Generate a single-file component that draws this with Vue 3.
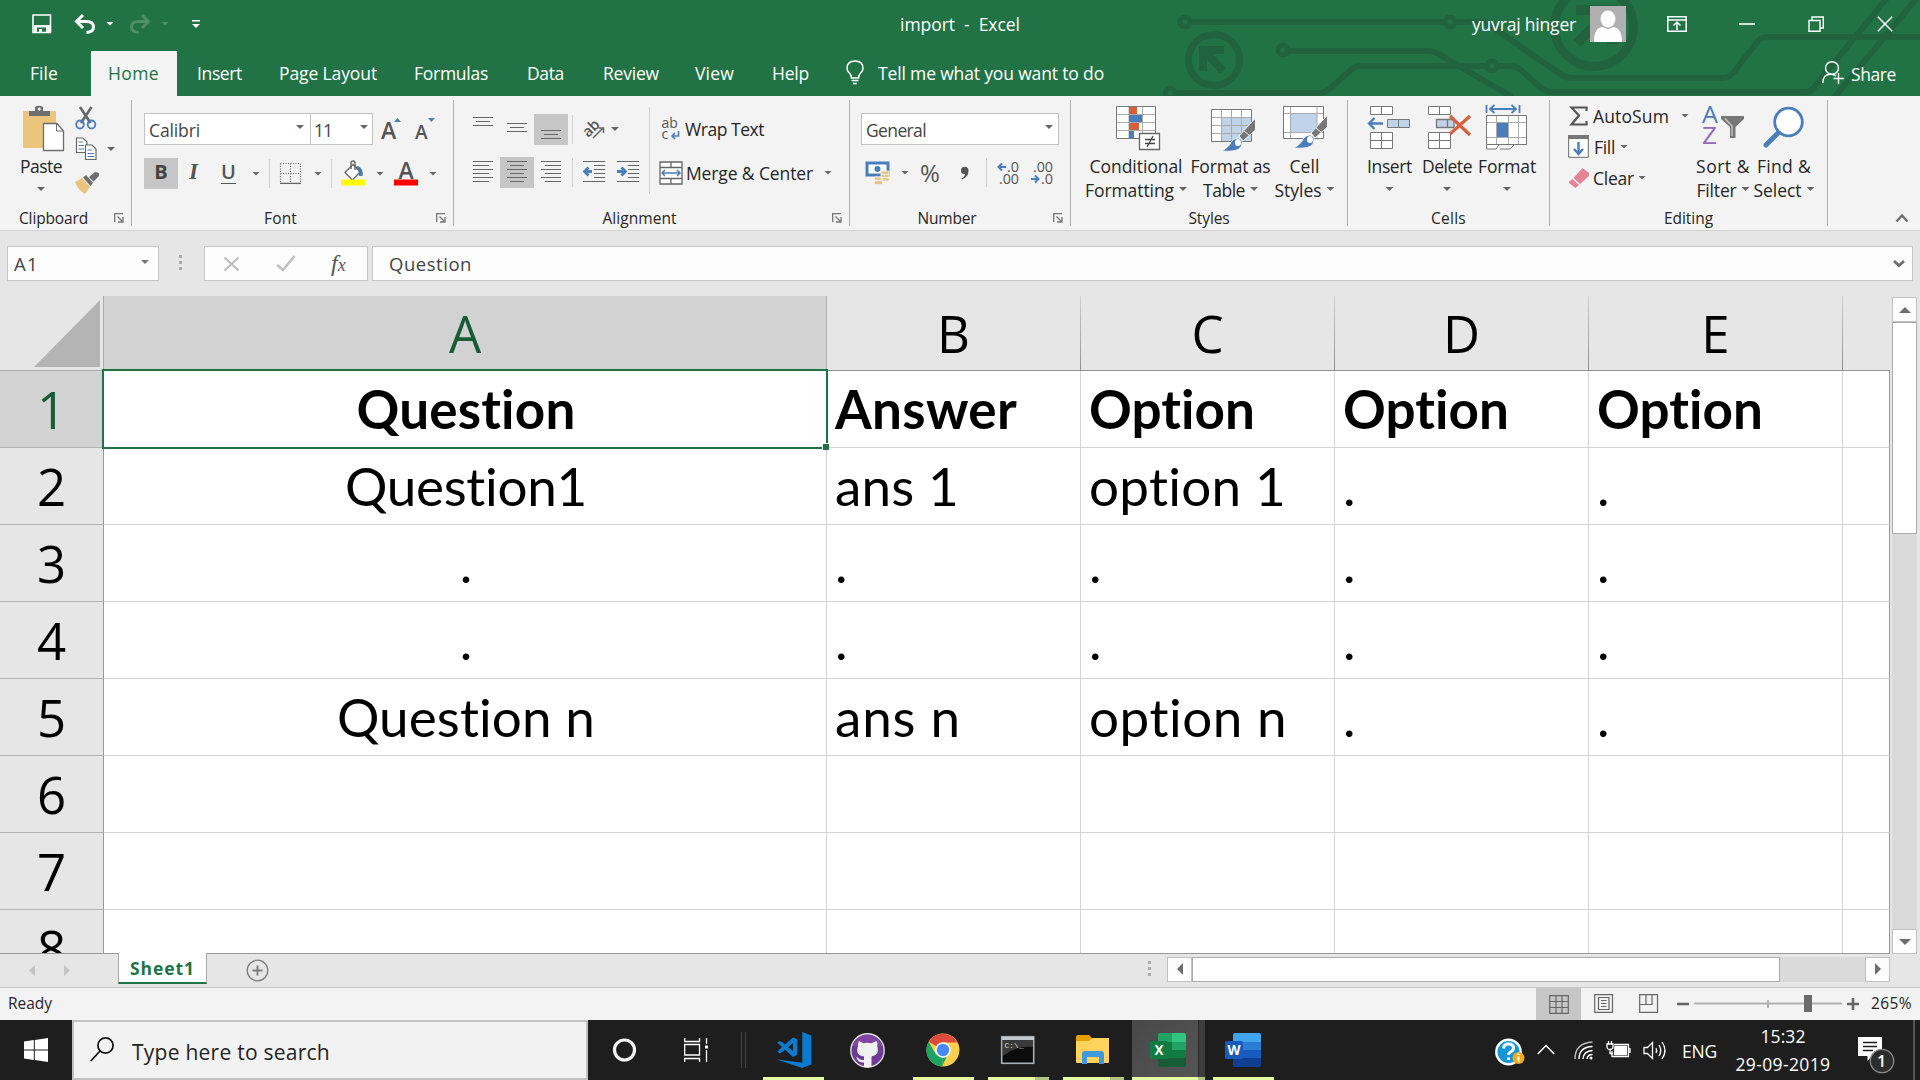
<script setup>
const tabs = [
  ['Insert', 43], ['Page Layout', 96], ['Formulas', 72], ['Data', 35],
  ['Review', 54], ['View', 37], ['Help', 35],
]

const columns = ['A', 'B', 'C', 'D', 'E', '']

const rows = [
  [['Question', 218], ['Answer', 180], ['Option', 165], ['Option', 165], ['Option', 165]],
  [['Question1', 241], ['ans 1', 122], ['option 1', 196], ['.', 0], ['.', 0]],
  [['.', 0], ['.', 0], ['.', 0], ['.', 0], ['.', 0]],
  [['.', 0], ['.', 0], ['.', 0], ['.', 0], ['.', 0]],
  [['Question n', 257], ['ans n', 124], ['option n', 197], ['.', 0], ['.', 0]],
  [], [], [],
]

// Spreads the letters of a label so that it fills the given width.
const vFit = {
  mounted(el, { value }) {
    if (!value) return
    const natural = el.getBoundingClientRect().width
    el.style.letterSpacing = (value + 2 - natural) / el.textContent.length + 'px'
  },
}
</script>

<template>
  <div class="screen">
    <header class="top">
      <svg class="art" width="1920" height="96" viewBox="0 0 1920 96" fill="none" stroke="#22633f" stroke-width="6">
        <circle cx="1185" cy="22" r="5" stroke-width="5" />
        <path d="M1191 22H1443M1457 22H1478Q1490 22 1498 31L1560 74Q1566 78 1572 78H1722Q1729 78 1733 73L1758 41Q1762 37 1768 37H1920" />
        <circle cx="1450" cy="22" r="5" stroke-width="5" />
        <circle cx="1283" cy="50" r="5" stroke-width="5" />
        <path d="M1289 51H1428Q1435 51 1442 56L1512 97M1177 93H1320Q1324 93 1329 89L1352 69Q1356 66 1362 66H1486M1498 66H1510Q1516 66 1521 70L1541 88Q1546 92 1552 92H1806Q1811 92 1815 86L1887 -2M1834 98L1917 -2" />
        <circle cx="1492" cy="66" r="5" stroke-width="5" />
        <circle cx="1170" cy="93" r="5" stroke-width="5" />
        <circle cx="1214" cy="60" r="25.5" stroke-width="7" />
        <path d="M1224 50H1203V71M1204 51L1223 71" stroke-width="8" />
        <circle cx="1594" cy="27" r="39.500" stroke-width="9" />
        <path d="M1576 10H1612V44M1611 10L1577 43" stroke-width="10" />
      </svg>
      <div class="titlebar">
        <svg width="20" height="20" viewBox="0 0 20 20"><path d="M1 1H18.500V18.500H1Z" fill="none" stroke="#fff" stroke-width="1.600" /><path d="M2 11H18V18H14V13.500H5V18H2ZM7 15h3v4H7Z" fill="#f3f3f3" /></svg>
        <svg width="22" height="20" viewBox="0 0 22 20" fill="none" stroke="#fff" stroke-width="3"><path d="M2 7.500H12.500Q19.500 7.500 19.500 13Q19.500 18 12.500 18.500M9 1L2.500 7.500L9 14" /></svg>
        <i class="dd light"></i>
        <svg width="22" height="20" viewBox="0 0 22 20" fill="none" stroke="#4d9068" stroke-width="3"><path d="M20 7.500H9.500Q2.500 7.500 2.500 13Q2.500 18 9.500 18.500M13 1L19.500 7.500L13 14" /></svg>
        <i class="dd dim"></i>
        <svg width="8" height="8" viewBox="0 0 8 8"><path d="M0 0H8V1.500H0ZM0 4H8L4 8Z" fill="#fff" /></svg>
        <span class="t title" v-fit="118">import&nbsp; -&nbsp; Excel</span>
        <span class="t" v-fit="102">yuvraj hinger</span>
        <svg width="36" height="36" viewBox="0 0 36 36"><rect width="36" height="36" fill="#b0b0b0" /><ellipse cx="18" cy="13" rx="7.500" ry="8.500" fill="#fff" /><path d="M4 36Q4 21 13 21Q18 25 23 21Q32 22 32 36Z" fill="#fff" /></svg>
        <svg width="20" height="16" viewBox="0 0 20 16" fill="none" stroke="#fff" stroke-width="1.500"><path d="M.8 .8H19.200V15.200H.8ZM1 4H19M10 14V7M6.500 9.500L10 6L13.500 9.500" /></svg>
        <svg width="16" height="16" viewBox="0 0 16 16"><path d="M0 8H16" stroke="#fff" stroke-width="1.600" /></svg>
        <svg width="16" height="16" viewBox="0 0 16 16" fill="none" stroke="#fff" stroke-width="1.400"><path d="M1 4.500H12V15.300H1ZM4 4V1H15.300V12H12.500" /></svg>
        <svg width="16" height="16" viewBox="0 0 16 16"><path d="M.8 .8L15.200 15.200M15.200 .8L.8 15.200" stroke="#fff" stroke-width="1.500" /></svg>
      </div>
      <nav class="tabs">
        <span class="t file" v-fit="26">File</span>
        <div class="home"><span class="t" v-fit="49">Home</span></div>
        <span v-for="[name, w] in tabs" :key="name" class="t" v-fit="w">{{ name }}</span>
        <svg width="18" height="25" viewBox="0 0 18 25" fill="none" stroke="#fff" stroke-width="1.500"><path d="M5.500 18Q5.500 15 3 12.500Q1 10.500 1 8.500Q1 1 9 1Q17 1 17 8.500Q17 10.500 15 12.500Q12.500 15 12.500 18ZM5.500 20.500H12.500M7 23.500H11" /></svg>
        <span class="t" v-fit="224">Tell me what you want to do</span>
        <svg width="22" height="23" viewBox="0 0 22 23" fill="none" stroke="#fff" stroke-width="1.400"><ellipse cx="10" cy="7" rx="6.500" ry="6.300" /><path d="M.8 22Q1 13 9 13.300Q12 13.300 14 15M16.500 12V23M11.500 17.500H22" /></svg>
        <span class="t share" v-fit="43">Share</span>
      </nav>
    </header>

    <section class="ribbon">
      <div class="group g-clip">
        <div class="body">
          <div class="big paste">
            <svg width="46" height="48" viewBox="18 105 46 48"><g transform="translate(-1 0)"><rect x="24" y="111" width="33" height="37" rx="1" fill="#ecc57c" /><path d="M30 116V111H36V107Q40 104.500 44 107V111H51V116Z" fill="#6e6e6e" /><circle cx="40.300" cy="109" r="1.500" fill="#f3f3f3" /><path d="M44.500 123.500H58L64.500 131V150.500H44.500Z" fill="#fff" stroke="#6e6e6e" stroke-width="1.300" /><path d="M57.500 123.500V131H64.500" fill="none" stroke="#6e6e6e" /></g></svg>
            <p><span class="t" v-fit="40">Paste</span></p>
            <p><i class="dd"></i></p>
          </div>
          <div class="clips">
            <svg width="22" height="24" viewBox="0 0 22 24" fill="none"><path d="M5 1L15.500 17M16.500 1L6 17" stroke="#666" stroke-width="2.600" /><ellipse cx="5" cy="18.500" rx="3.800" ry="4" stroke="#4a7ebb" stroke-width="1.800" /><ellipse cx="16.500" cy="18.500" rx="3.800" ry="4" stroke="#4a7ebb" stroke-width="1.800" /></svg>
            <div class="copy">
              <svg width="22" height="24" viewBox="0 0 22 24" fill="#fff" stroke="#666" stroke-width="1.200"><path d="M1.500 1H8L12 5V15.500H1.500Z" /><path d="M10.500 8H17L21 12V22.500H10.500Z" /><path d="M3.500 5H8M3.500 8.500H9M3.500 12H9M12.500 13H17M12.500 16.500H19M12.500 19.500H19" stroke="#4a7ebb" /></svg>
              <i class="dd"></i>
            </div>
            <svg width="24" height="22" viewBox="0 0 24 22"><path d="M0 10L7 6L15 15L10 22Q3 18 0 10Z" fill="#ecc57c" /><path d="M8 5.500L11 3L18 11L15.500 14ZM14 5L20 0L24 1V4L18.500 9.500Z" fill="#6e6e6e" /></svg>
          </div>
        </div>
        <footer><span class="t s" v-fit="67">Clipboard</span><svg class="launch" width="10" height="10" viewBox="0 0 10 10"><path d="M.7 9V.7H9M3.500 3.500L8 8M9 4V9H4" fill="none" stroke="#777" stroke-width="1.300" /></svg></footer>
      </div>
      <i class="sep"></i>

      <div class="group g-font">
        <div class="body rows">
          <div class="row f1">
            <div class="combo"><span class="t" v-fit="49">Calibri</span><i class="dd"></i></div>
            <div class="combo size"><span class="t" v-fit="16">11</span><i class="dd"></i></div>
            <svg width="21" height="28" viewBox="0 0 21 28"><text x="0" y="24" font-size="23" class="glyph semi">A</text><path d="M13 7L16.500 3L20 7Z" fill="#4a7ebb" /></svg>
            <svg width="21" height="28" viewBox="0 0 21 28"><text x="0" y="24" font-size="19" class="glyph semi">A</text><path d="M13 3H20L16.500 7Z" fill="#4a7ebb" /></svg>
          </div>
          <div class="row f2">
            <div class="on"><b class="bold">B</b></div>
            <span class="italic">I</span>
            <span class="under">U</span>
            <i class="dd"></i><i class="bar"></i>
            <svg width="21" height="21" viewBox="0 0 21 21" fill="none" stroke="#666"><path d="M.5 .5H20.500M.5 10.500H20.500M.5 .5V20M10.500 .5V20M20.500 .5V20" stroke-dasharray="1 1.500" stroke-width="1.200" /><path d="M0 20.400H21" stroke-width="1.300" /></svg>
            <i class="dd"></i><i class="bar"></i>
            <svg width="24" height="27" viewBox="0 0 24 27"><path d="M17 6Q23 9 21.500 16H18Q18 10 14 7Z" fill="#4a7ebb" /><path d="M4 12.500L12 4.500L19 12L11.500 20Z" fill="#fff" stroke="#666" stroke-width="1.300" /><path d="M10 9V3Q10 1 12 1Q14 1 14 3V10" fill="none" stroke="#666" stroke-width="1.400" /><rect y="19.500" width="24" height="6" fill="#ff0" /></svg>
            <i class="dd"></i>
            <svg width="24" height="27" viewBox="0 0 24 27"><text x="4.500" y="19" font-size="23" class="glyph soft">A</text><rect y="19.500" width="24" height="6" fill="red" /></svg>
            <i class="dd"></i>
          </div>
        </div>
        <footer><span class="t s" v-fit="31">Font</span><svg class="launch" width="10" height="10" viewBox="0 0 10 10"><path d="M.7 9V.7H9M3.500 3.500L8 8M9 4V9H4" fill="none" stroke="#777" stroke-width="1.300" /></svg></footer>
      </div>
      <i class="sep"></i>

      <div class="group g-align">
        <div class="body">
          <div class="rows aleft">
            <div class="row a1">
              <svg class="ln" width="20" height="32"><path d="M0 4.500H20M3 8.500H17M0 12.500H20" /></svg>
              <svg class="ln" width="20" height="32"><path d="M0 10.500H20M3 14.500H17M0 18.500H20" /></svg>
              <div class="on"><svg class="ln" width="20" height="31"><path d="M0 16.500H20M3 20.500H17M0 24.500H20" /></svg></div>
              <i class="bar"></i>
              <svg width="20" height="20" viewBox="0 0 20 20"><text x="-1" y="15" font-size="15" class="glyph soft" transform="rotate(-45 6 12)">ab</text><path d="M8 19L18 9M13.500 9H18.500V14" fill="none" stroke="#666" stroke-width="1.500" /></svg>
              <i class="dd"></i>
            </div>
            <div class="row a2">
              <svg class="ln" width="20" height="31"><path d="M0 4.500H20M0 8.500H16M0 12.500H20M0 16.500H16M0 20.500H20M0 24.500H16" /></svg>
              <div class="on"><svg class="ln" width="20" height="31"><path d="M0 4.500H20M3 8.500H17M0 12.500H20M3 16.500H17M0 20.500H20M3 24.500H17" /></svg></div>
              <svg class="ln" width="20" height="31"><path d="M0 4.500H20M4 8.500H20M0 12.500H20M4 16.500H20M0 20.500H20M4 24.500H20" /></svg>
              <i class="bar"></i>
              <svg class="ln" width="22" height="31"><path d="M0 4.500H22M11 8.500H22M11 12.500H22M11 16.500H22M11 20.500H22M0 24.500H22" /><path class="blue" d="M9 14.500H2M5.500 10.500L1.500 14.500L5.500 18.500" /></svg>
              <svg class="ln" width="22" height="31"><path d="M0 4.500H22M11 8.500H22M11 12.500H22M11 16.500H22M11 20.500H22M0 24.500H22" /><path class="blue" d="M0 14.500H8M4.500 10.500L8.500 14.500L4.500 18.500" /></svg>
            </div>
          </div>
          <i class="tall"></i>
          <div class="rows aright">
            <div class="row w1">
              <svg width="18" height="22" viewBox="0 0 18 22"><text x="-.5" y="9.500" font-size="14" class="glyph thin">ab</text><text x="-.5" y="21" font-size="14" class="glyph thin">c</text><path d="M16.500 13V18H10M13 15L10 18L13 21" fill="none" stroke="#4a7ebb" stroke-width="1.600" /></svg>
              <span class="t" v-fit="77">Wrap Text</span>
            </div>
            <div class="row w2">
              <svg width="24" height="24" viewBox="0 0 24 24" fill="#fff" stroke="#666" stroke-width="1.300"><path d="M1 1H23V23H1ZM1 6.500H23M1 17.500H23M12 1V6.500M12 17.500V23" /><path d="M3 12H21M6 9L3 12L6 15M18 9L21 12L18 15" fill="none" stroke="#4a7ebb" stroke-width="1.500" /></svg>
              <span class="t" v-fit="125">Merge &amp; Center</span>
              <i class="dd"></i>
            </div>
          </div>
        </div>
        <footer><span class="t s" v-fit="72">Alignment</span><svg class="launch" width="10" height="10" viewBox="0 0 10 10"><path d="M.7 9V.7H9M3.500 3.500L8 8M9 4V9H4" fill="none" stroke="#777" stroke-width="1.300" /></svg></footer>
      </div>
      <i class="sep"></i>

      <div class="group g-num">
        <div class="body rows">
          <div class="combo num"><span class="t" v-fit="58">General</span><i class="dd"></i></div>
          <div class="row n2">
            <svg width="24" height="24" viewBox="0 0 24 24"><rect x="1" y="2" width="21" height="12" fill="#fff" stroke="#4a7ebb" stroke-width="3" /><circle cx="11.500" cy="8" r="3" fill="#4a7ebb" /><path d="M15 10h8v10h-8zM8.500 16h8v7.500h-8z" fill="#ecc57c" stroke="#f3f3f3" stroke-width=".8" /><path d="M15 13.500h8M15 16.500h8M8.500 19.500h8" stroke="#fff" /></svg>
            <i class="dd"></i>
            <span class="pct">%</span>
            <svg width="9" height="14" viewBox="0 0 9 14"><path d="M1 4.500A3.700 3.700 0 1 1 8.500 4.500Q8.500 11 2 13.500L1.500 12.500Q5 10.500 5 8Q1 8.500 1 4.500Z" fill="#555" /></svg>
            <i class="bar"></i>
            <svg width="22" height="24" viewBox="0 0 22 24"><text x="10" y="10.500" font-size="14" class="glyph thin" textLength="12" lengthAdjust="spacingAndGlyphs">.0</text><text x="2" y="22.500" font-size="14" class="glyph thin" textLength="20" lengthAdjust="spacingAndGlyphs">.00</text><path d="M9 6H1.500M5 2.500L1.500 6L5 9.500" fill="none" stroke="#4a7ebb" stroke-width="2" /></svg>
            <svg width="22" height="24" viewBox="0 0 22 24"><text x="2" y="10.500" font-size="14" class="glyph thin" textLength="20" lengthAdjust="spacingAndGlyphs">.00</text><text x="10" y="22.500" font-size="14" class="glyph thin" textLength="12" lengthAdjust="spacingAndGlyphs">.0</text><path d="M0 18H7.500M4 14.500L7.500 18L4 21.500" fill="none" stroke="#4a7ebb" stroke-width="2" /></svg>
          </div>
        </div>
        <footer><span class="t s" v-fit="57">Number</span><svg class="launch" width="10" height="10" viewBox="0 0 10 10"><path d="M.7 9V.7H9M3.500 3.500L8 8M9 4V9H4" fill="none" stroke="#777" stroke-width="1.300" /></svg></footer>
      </div>
      <i class="sep"></i>

      <div class="group g-styles">
        <div class="body">
          <div class="big">
            <svg width="50" height="48" viewBox="1111 105 50 48"><path d="M1116.500 106.500H1155.500V138.500H1116.500Z" fill="#fff" stroke="#777" /><path d="M1117 114.500H1155M1117 122.500H1155M1117 130.500H1155M1129 107V138M1142.500 107V138" stroke="#aaa" /><path d="M1129 107h8v7h-8zM1129 123h10v7h-10z" fill="#d65f3d" /><path d="M1129 115h13v7h-13zM1129 131h5v7h-5z" fill="#4a7ebb" /><path d="M1139.500 133.500H1159.500V149.500H1139.500Z" fill="#fff" stroke="#666" stroke-width="1.300" /><path d="M1145 139.500H1155M1145 143.500H1155M1153 136L1147 147" stroke="#444" stroke-width="1.300" /></svg>
            <p><span class="t" v-fit="91">Conditional</span></p>
            <p><span class="t" v-fit="87">Formatting</span><i class="dd"></i></p>
          </div>
          <div class="big">
            <svg width="52" height="48" viewBox="1205 105 52 48"><path d="M1211.500 109.500H1251.500V141.500H1211.500Z" fill="#fff" stroke="#777" /><path d="M1222 118H1251V141H1222Z" fill="#c0d3ea" /><path d="M1212 117.500H1251M1212 125.500H1251M1212 133.500H1251M1221.500 110V141M1231.500 110V141M1241.500 110V141" stroke="#aaa" /><path d="M1255.500 118V130L1243 141L1239 136Z" fill="#777" stroke="#f3f3f3" /><path d="M1244 131L1250 136" stroke="#f3f3f3" /><path d="M1222 151Q1230 146 1231 142Q1236 136 1241 139Q1244 144 1239 149Q1234 152 1222 151Z" fill="#4a7ebb" stroke="#f3f3f3" /><ellipse cx="1238" cy="142.500" rx="3" ry="3.500" fill="#fff" /></svg>
            <p><span class="t" v-fit="78">Format as</span></p>
            <p><span class="t" v-fit="40">Table</span><i class="dd"></i></p>
          </div>
          <div class="big">
            <svg width="50" height="48" viewBox="1280 105 50 48"><path d="M1283.500 106.500H1323.500V138.500H1283.500Z" fill="#fff" stroke="#777" /><path d="M1290 113H1317V132H1290Z" fill="#c0d3ea" /><path d="M1284 113.500H1323M1284 132.500H1323M1290.500 107V138M1317 107V138" stroke="#aaa" /><path d="M1327.500 115V127L1315 138L1311 133Z" fill="#777" stroke="#f3f3f3" /><path d="M1316 128L1322 133" stroke="#f3f3f3" /><path d="M1294 148Q1302 143 1303 139Q1308 133 1313 136Q1316 141 1311 146Q1306 149 1294 148Z" fill="#4a7ebb" stroke="#f3f3f3" /><ellipse cx="1310" cy="139.500" rx="3" ry="3.500" fill="#fff" /></svg>
            <p><span class="t" v-fit="28">Cell</span></p>
            <p><span class="t" v-fit="45">Styles</span><i class="dd"></i></p>
          </div>
        </div>
        <footer><span class="t s" v-fit="39">Styles</span></footer>
      </div>
      <i class="sep"></i>

      <div class="group g-cells">
        <div class="body">
          <div class="big">
            <svg width="46" height="48" viewBox="1367 105 46 48" stroke="#777" fill="#fff"><path d="M1370.500 106.500H1392.500V114.500H1370.500ZM1381.500 106.500V114.500M1370.500 132.500H1392.500V148.500H1370.500ZM1381.500 132.500V148.500M1370.500 140.500H1392.500" /><path d="M1387.500 119.500H1409.500V127.500H1387.500ZM1398.500 119.500V127.500" fill="#c0d3ea" /><path d="M1383 123.500H1369M1374.500 118L1369 123.500L1374.500 129" fill="none" stroke="#4a7ebb" stroke-width="2.300" /></svg>
            <p><span class="t" v-fit="43">Insert</span></p>
            <p><i class="dd"></i></p>
          </div>
          <div class="big">
            <svg width="50" height="48" viewBox="1422 105 50 48" stroke="#777" fill="#fff"><path d="M1428.500 106.500H1450.500V114.500H1428.500ZM1439.500 106.500V114.500M1428.500 132.500H1450.500V148.500H1428.500ZM1439.500 132.500V148.500M1428.500 140.500H1450.500" /><path d="M1436.500 119.500H1454V127.500H1436.500ZM1447.500 119.500V127.500" fill="#c0d3ea" stroke-width="1.300" /><path d="M1450 116L1470 135M1470 116L1450 134" fill="none" stroke="#d65f3d" stroke-width="3.200" /></svg>
            <p><span class="t" v-fit="48">Delete</span></p>
            <p><i class="dd"></i></p>
          </div>
          <div class="big">
            <svg width="46" height="48" viewBox="1484 105 46 48" fill="#fff" stroke="#777"><path d="M1486.500 115.500H1526.500V144.500H1486.500Z" /><path d="M1487 122.500H1526M1487 137.500H1526M1496.500 116V144M1508.500 116V144M1518.500 116V144" stroke="#aaa" /><path d="M1497 123h11v14h-11z" fill="#4a7ebb" stroke="none" /><path d="M1486.500 145V149H1496L1499 145M1500 149H1510L1514 145" /><path d="M1486.500 105V113M1519.500 105V113M1490 109H1516M1494.500 105L1490 109L1494.500 113M1511.500 105L1516 109L1511.500 113" fill="none" stroke="#4a7ebb" stroke-width="1.800" /></svg>
            <p><span class="t" v-fit="56">Format</span></p>
            <p><i class="dd"></i></p>
          </div>
        </div>
        <footer><span class="t s" v-fit="33">Cells</span></footer>
      </div>
      <i class="sep"></i>

      <div class="group g-edit">
        <div class="body">
          <div class="list">
            <div class="row e1"><svg width="22" height="20" viewBox="0 0 22 20"><path d="M18.500 5V1.500H3.500L11 9.500L3.500 18.500H18.500V15" fill="none" stroke="#555" stroke-width="2.200" /></svg><span class="t" v-fit="74">AutoSum</span><i class="dd"></i></div>
            <div class="row e2"><svg width="22" height="23" viewBox="0 0 22 23"><path d="M.7 .7H20.300V22.300H.7Z" fill="#fff" stroke="#666" /><path d="M0 0H21V4H0Z" fill="#777" /><path d="M10.500 7V19M6 14L10.500 19L15 14" fill="none" stroke="#4a7ebb" stroke-width="2.400" /></svg><span class="t" v-fit="19">Fill</span><i class="dd"></i></div>
            <div class="row e3"><svg width="22" height="20" viewBox="0 0 22 20"><path d="M14.500 0L21 5V8L12 16L5.500 10ZM4.500 11L11 17L7.500 20L1 15V13.500Z" fill="#e58497" /></svg><span class="t" v-fit="39">Clear</span><i class="dd"></i></div>
          </div>
          <div class="big">
            <svg width="46" height="48" viewBox="1700 105 46 48"><text x="1702" y="123" font-size="24" textLength="16" lengthAdjust="spacingAndGlyphs" class="glyph thin az">A</text><text x="1702" y="144" font-size="24" textLength="15" lengthAdjust="spacingAndGlyphs" class="glyph thin za">Z</text><path d="M1721 116H1744V119L1735.500 127V138H1730V127L1721 119Z" fill="#777" /><path d="M1725 118.500L1732 126V136" fill="none" stroke="#ccc" stroke-width="1.300" /></svg>
            <p><span class="t" v-fit="52">Sort &amp;</span></p>
            <p><span class="t" v-fit="38">Filter</span><i class="dd"></i></p>
          </div>
          <div class="big">
            <svg width="46" height="48" viewBox="1761 105 46 48"><path d="M1779 132L1766 145" stroke="#4a7ebb" stroke-width="5" stroke-linecap="round" /><circle cx="1788.500" cy="122" r="13.800" fill="#fff" stroke="#4a7ebb" stroke-width="2.800" /></svg>
            <p><span class="t" v-fit="52">Find &amp;</span></p>
            <p><span class="t" v-fit="46">Select</span><i class="dd"></i></p>
          </div>
        </div>
        <footer><span class="t s" v-fit="47">Editing</span></footer>
      </div>
      <i class="sep"></i>
      <svg class="collapse" width="14" height="10" viewBox="0 0 14 10"><path d="M1.500 8.500L7 2.500L12.500 8.500" fill="none" stroke="#6e6e6e" stroke-width="2.400" /></svg>
    </section>

    <section class="formula">
      <div class="box name"><span class="t" v-fit="23">A1</span><i class="dd"></i></div>
      <i class="dots"></i>
      <div class="box fx">
        <svg width="17" height="16" viewBox="0 0 17 16"><path d="M1.500 1.500L15.500 14.500M15.500 1.500L1.500 14.500" stroke="#bdbdbd" stroke-width="2" /></svg>
        <svg width="20" height="17" viewBox="0 0 20 17"><path d="M1 10L7 15L18.500 1" fill="none" stroke="#c0c0c0" stroke-width="2.600" /></svg>
        <span class="fxt">f<small>x</small></span>
      </div>
      <div class="box value"><span class="t" v-fit="81">Question</span><svg width="12" height="9" viewBox="0 0 12 9"><path d="M1 2L6 6.500L11 2" fill="none" stroke="#6e6e6e" stroke-width="2.800" /></svg></div>
    </section>

    <section class="work">
      <div class="sheet">
        <div class="corner"><i></i></div>
        <div v-for="(c, i) in columns" :key="'h' + i" class="colhead" :class="{ sel: i === 0 }">{{ c }}</div>
        <template v-for="(r, y) in rows" :key="y">
          <div class="rowhead" :class="{ sel: y === 0 }">{{ y + 1 }}</div>
          <div v-for="(c, x) in columns" :key="x" class="cell" :class="{ head: y === 0, mid: x === 0, current: x === 0 && y === 0 }">
            <span v-if="r[x]" class="ct" v-fit="r[x][1]">{{ r[x][0] }}</span>
            <div v-if="x === 0 && y === 0" class="cursor"><i></i></div>
          </div>
        </template>
      </div>
      <div class="vscroll">
        <div class="btn"><svg width="12" height="6"><path d="M0 6L6 0L12 6Z" fill="#6e6e6e" /></svg></div>
        <div class="thumb"></div>
        <div class="track"></div>
        <div class="btn"><svg width="12" height="6"><path d="M0 0H12L6 6Z" fill="#6e6e6e" /></svg></div>
      </div>
    </section>

    <section class="sheets">
      <svg width="6" height="11"><path d="M6 0V11L0 5.500Z" fill="#c3c3c3" /></svg>
      <svg width="6" height="11"><path d="M0 0V11L6 5.500Z" fill="#c3c3c3" /></svg>
      <div class="sheettab"><b class="t" v-fit="63">Sheet1</b></div>
      <svg width="23" height="23" viewBox="0 0 23 23" fill="none" stroke="#7d7d7d"><circle cx="11.500" cy="11.500" r="10.300" stroke-width="1.300" /><path d="M11.500 6.500V16.500M6.500 11.500H16.500" stroke-width="1.900" /></svg>
      <i class="dots"></i>
      <div class="hscroll">
        <div class="btn"><svg width="6" height="12"><path d="M6 0V12L0 6Z" fill="#6e6e6e" /></svg></div>
        <div class="thumb"></div>
        <div class="track"></div>
        <div class="btn"><svg width="6" height="12"><path d="M0 0V12L6 6Z" fill="#6e6e6e" /></svg></div>
      </div>
    </section>

    <section class="status">
      <span class="t s" v-fit="42">Ready</span>
      <div class="viewon"><svg width="20" height="19" viewBox="0 0 20 19" fill="none" stroke="#666" stroke-width="1.200"><path d="M.7 .7H19.300V18.300H.7ZM.7 6.500H19.300M.7 12.500H19.300M7 .7V18.300M13 .7V18.300" /></svg></div>
      <svg width="20" height="19" viewBox="0 0 20 19" fill="none" stroke="#666" stroke-width="1.200"><path d="M.7 .7H18.500V18.300H.7ZM4.500 3.500H15V15.500H4.500ZM7 6.500H12.500M7 9.500H12.500M7 12.500H12.500" /></svg>
      <svg width="20" height="19" viewBox="0 0 20 19" fill="none" stroke="#666" stroke-width="1.200"><path d="M.7 .7H18.500V18.300H.7ZM.7 10.500H13V.7M7 .7V10.500" /></svg>
      <svg width="12" height="12"><path d="M0 6H12" stroke="#666" stroke-width="2.600" /></svg>
      <svg width="148" height="20"><path d="M0 9.500H148" stroke="#b1b1b1" stroke-width="2" /><path d="M74 6V14" stroke="#b1b1b1" stroke-width="2" /><rect x="110" y="1" width="8" height="17" fill="#6b6b6b" /></svg>
      <svg width="12" height="12"><path d="M0 6H12M6 0V12" stroke="#666" stroke-width="2.600" /></svg>
      <span class="t s" v-fit="39">265%</span>
    </section>

    <footer class="taskbar">
      <div class="start"><svg width="24" height="24" viewBox="0 0 24 24" fill="#fff"><path d="M0 3.400L9.800 2V11.500H0ZM10.800 1.900L24 0V11.500H10.800ZM0 12.500H9.800V22L0 20.600ZM10.800 12.500H24V24L10.800 22.100Z" /></svg></div>
      <div class="search">
        <svg width="24" height="25" viewBox="0 0 24 25" fill="none" stroke="#111" stroke-width="1.700"><circle cx="15.500" cy="8.500" r="7.600" /><path d="M10 14L.8 24" /></svg>
        <span class="t" v-fit="196">Type here to search</span>
      </div>
      <div class="apps">
        <svg width="24" height="24" viewBox="0 0 24 24"><circle cx="11.500" cy="12" r="10" fill="none" stroke="#f4f4f4" stroke-width="3.200" /></svg>
        <svg width="25" height="24" viewBox="0 0 25 24" fill="none" stroke="#fff" stroke-width="1.300"><path d="M.7 0V3.500H15.500V0M.7 6.500H15.500V17H.7ZM.7 24V20.500H15.500V24M22.500 0V6M22.500 12V24" /><rect x="21" y="7.500" width="3" height="3" fill="#fff" stroke="none" /></svg>
        <i class="duo"></i>
        <svg width="36" height="36" viewBox="0 0 36 36" fill="#0a7bd0"><path d="M26.300 0L35.300 3.500V32.500L26.300 36L0 27.300L26.300 30.800Z" /><path fill-rule="evenodd" d="M17 5.500L21.300 7.300V22.700L17 25L9 17.700L4.200 21.500L1.200 20L6 15L1.200 10.500L4.200 9L9 12.500ZM17 11L12.300 15L17 19.200Z" /></svg>
        <svg width="35" height="35" viewBox="0 0 35 35"><circle cx="17.500" cy="17.500" r="16.700" fill="#6e3b96" stroke="#ddd" stroke-width="1.400" /><path d="M3 13A15 15 0 0 1 32 13Z" fill="#8a4aa8" opacity=".7" /><path d="M9 8L13.500 10.200Q17.500 9.500 21.500 10.200L26.500 8Q28 10 27.300 13Q30 22.500 21.500 23.500V34H14V29.500Q9 30 6.500 25Q5.500 24 7.500 24.500Q10 27.500 14 27V23.500Q5 22.500 8 13Q7.500 10 9 8Z" fill="#f1f1f1" /></svg>
        <svg width="34" height="34" viewBox="0 0 34 34"><circle cx="17" cy="17" r="16.500" fill="#ffd04a" /><path d="M17 17L2.700 8.700A16.500 16.500 0 0 1 31.300 9.500H17Z" fill="#de4b3e" /><path d="M2.700 8.700L9.800 21.200L17 24.500L16 33.500A16.500 16.500 0 0 1 2.700 8.700Z" fill="#1ca362" /><path d="M16 33.500L21 23L17 24Z" fill="#1ca362" /><circle cx="17" cy="17" r="7.800" fill="#fff" /><circle cx="17" cy="17" r="6.200" fill="#4a8af4" /></svg>
        <svg width="34" height="28" viewBox="0 0 34 28"><rect x=".7" y=".7" width="32" height="26.600" fill="#0c0c0c" stroke="#a9b0b5" stroke-width="1.600" /><path d="M1 1H33V4H1Z" fill="#c2c8cc" /><path d="M2 4H32V11Q16 9 2 20Z" fill="#3a3a3a" /><text x="3.500" y="12" font-size="8" font-family="Liberation Mono" fill="#ddd">C:\_</text></svg>
        <svg width="34" height="30" viewBox="0 0 34 30"><path d="M0 2Q0 0 2 0H13L16 3H0Z" fill="#e5a100" /><path d="M0 3H16L18 3H33V27Q33 28 32 28H1Q0 28 0 27Z" fill="#ffd35c" /><path d="M0 3V6H13L17 3Z" fill="#e5a100" /><path d="M6 29V19Q6 16 9 16H25Q28 16 28 19V29H23V22H11V29Z" fill="#3d9ade" /></svg>
        <div class="active"><svg width="36" height="34" viewBox="0 0 36 34"><path d="M8 2Q8 0 10 0H22V9H8Z" fill="#21a366" /><path d="M22 0H34Q36 0 36 2V9H22Z" fill="#33c481" /><path d="M8 9H22V25H8Z" fill="#107c41" /><path d="M22 9H36V17H22Z" fill="#21a366" /><path d="M22 17H36V25H22Z" fill="#107c41" /><path d="M8 25H36V32Q36 34 34 34H10Q8 34 8 32Z" fill="#185c37" /><rect y="8" width="18" height="18" rx="1.500" fill="#107c41" /><text x="4.500" y="22" font-size="14.500" class="logo heavy" textLength="9" lengthAdjust="spacingAndGlyphs">X</text></svg></div>
        <i class="stack"></i>
        <svg width="36" height="34" viewBox="0 0 36 34"><path d="M8 2Q8 0 10 0H34Q36 0 36 2V9H8Z" fill="#41a5ee" /><path d="M8 9H36V17H8Z" fill="#2b7cd3" /><path d="M8 17H36V25H8Z" fill="#185abd" /><path d="M8 25H36V32Q36 34 34 34H10Q8 34 8 32Z" fill="#103f91" /><rect y="8" width="18" height="18" rx="1.500" fill="#185abd" /><text x="2.500" y="22" font-size="14.500" class="logo heavy" textLength="13" lengthAdjust="spacingAndGlyphs">W</text></svg>
      </div>
      <div class="lines"><i></i><i></i><i></i><i></i><i></i><i></i><i></i><i></i><i></i></div>
      <div class="tray">
        <svg width="30" height="28" viewBox="0 0 30 28"><circle cx="13.500" cy="14" r="12.200" fill="#1496d8" stroke="#fff" stroke-width="2.400" /><path d="M8.500 10.500Q9 6 13.500 6Q18.500 6 18.500 10Q18.500 12.500 15.500 14Q13.500 15 13.500 17M13.500 19.500V22" fill="none" stroke="#fff" stroke-width="3" /><circle cx="23.500" cy="20" r="6" fill="#f6ab1c" /><path d="M23.500 18.500V23.500M23.500 15.500V17" stroke="#fff" stroke-width="2" /></svg>
        <svg width="18" height="11"><path d="M.8 10L9 1.500L17.200 10" fill="none" stroke="#fff" stroke-width="1.500" /></svg>
        <svg width="20" height="19" viewBox="0 0 20 19" fill="none" stroke="#fff" stroke-width="1.400"><path d="M1 18Q1 2 18.500 1" stroke="#bbb" /><path d="M5 18Q5 6 18.500 5.500M9 18Q9.500 10 18.500 9.500M13 18Q13.500 13.500 18.500 13.500" /><circle cx="17" cy="17" r="1.500" fill="#fff" stroke="none" /></svg>
        <svg width="25" height="17" viewBox="0 0 25 17" fill="none" stroke="#fff" stroke-width="1.300"><path d="M8 3.500H22.500V15.500H6V10M24 7V12" /><path d="M9 5.500H20.500V13.500H8.500Z" fill="#fff" /><path d="M1 3H7V6Q7 8.500 4 8.500Q1 8.500 1 6ZM2.500 0V3M5.500 0V3M4 8.500V12.500H7" /></svg>
        <svg width="24" height="19" viewBox="0 0 24 19" fill="none" stroke="#fff" stroke-width="1.300"><path d="M1 6.500H4.500L9.500 1.500V17.500L4.500 12.500H1Z" /><path d="M13 7Q14.500 9.500 13 12M16 4Q19.500 9.500 16 15M19 1Q25 9.500 19 18" /></svg>
        <span class="t" v-fit="33">ENG</span>
        <div class="clock"><span class="t" v-fit="43">15:32</span><span class="t" v-fit="93">29-09-2019</span></div>
        <svg width="38" height="38" viewBox="0 0 38 38"><path d="M0 0H24V19H14L9.500 24V19H0Z" fill="#fff" /><path d="M5 5.500H19M5 9.500H19M5 13.500H15" stroke="#1e1e1e" stroke-width="1.300" /><circle cx="24" cy="24" r="11.700" fill="#2d2d2d" stroke="#8a8a8a" stroke-width="1.300" /><text x="19" y="29.500" font-size="16" class="logo semi">1</text></svg>
        <i class="peek"></i>
      </div>
    </footer>
  </div>
</template>

<style>
body { margin: 0; overflow: hidden; }
</style>

<style scoped>
* { box-sizing: border-box; }
.screen { width: 1920px; height: 1080px; overflow: hidden; background: #e6e6e6; font-family: "Open Sans", "Noto Sans", sans-serif; font-size: 17.5px; color: #262626; }
svg { display: block; flex: none; overflow: visible; }
i { display: block; font-style: normal; }
p { margin: 0; }
.t { display: inline-block; justify-self: start; white-space: nowrap; margin-left: -1px; line-height: 24px; }
.t.s { font-size: 15.5px; }
.dd { flex: none; width: 8px; height: 4px; background: #666; clip-path: polygon(0 0, 100% 0, 50% 100%); }
.dd.light { background: #fff; }
.dd.dim { background: #4d9068; }
.glyph { fill: #555; font-family: "Open Sans", sans-serif; font-weight: 700; }
.glyph.thin { font-weight: 500; }
.glyph.soft, .glyph.semi { font-weight: 600; }
.glyph.az { fill: #4a7ebb; }
.glyph.za { fill: #9467b8; }
.logo { font-family: "Open Sans", sans-serif; fill: #fff; }
.logo.heavy { font-weight: 700; }
.logo.semi { font-weight: 600; }

.top { position: relative; height: 96px; background: #217346; color: #fff; }
.art { position: absolute; left: 0; top: 0; overflow: hidden; }
.titlebar, .tabs { position: relative; display: grid; align-items: center; }
.titlebar { height: 47px; padding-left: 32px; grid-template-columns: 42px 32px 23px 32px 31px 709px 572px 117px 77px 72px 69px 69px 16px; }
.tabs { height: 49px; padding: 2px 0 0 32px; grid-template-columns: 59px 107px 82px 135px 113px 76px 92px 77px 73px 33px 943px 30px 60px; }
.tabs .file { margin-left: -2px; }
.home { width: 86px; height: 45px; align-self: end; background: #f3f3f3; color: #217346; padding: 10px 0 0 18px; }
.share { padding-top: 2px; }

.ribbon { display: flex; height: 135px; background: #f3f3f3; border-bottom: 1px solid #d2d2d2; }
.group { display: flex; flex-direction: column; flex: none; }
.body { display: flex; height: 109px; }
.group footer { position: relative; display: flex; justify-content: center; height: 26px; padding-top: 2px; padding-left: 1px; }
.launch { position: absolute; right: 7px; top: 9px; }
.sep { flex: none; width: 1px; height: 126px; margin-top: 4px; background: #b0b0b0; }
.g-clip { width: 131px; }
.g-clip footer { padding-right: 24px; }
.g-font { width: 321px; }
.g-font footer { padding-right: 24px; }
.g-align { width: 395px; }
.g-align footer { padding-right: 24px; }
.g-num { width: 220px; }
.g-num footer { padding-right: 26px; }
.g-styles { width: 276px; }
.g-cells { width: 201px; }
.g-edit { width: 277px; }
.body.rows { display: block; padding-left: 12px; }
.rows { padding-top: 17px; }
.row { display: grid; align-items: center; }
.big { display: flex; flex-direction: column; align-items: center; padding-top: 9px; }
.big p { display: flex; align-items: center; justify-content: center; gap: 5px; height: 24px; }
.big .t { margin-left: 0; padding-top: 1px; }
.paste { margin-left: 18px; width: 46px; }
.clips { padding: 10px 0 0 11px; width: 60px; }
.copy { display: flex; align-items: center; gap: 10px; margin: 7px 0 11px; }
.combo { display: flex; align-items: center; justify-content: space-between; width: 167px; height: 32px; padding: 0 6px 0 5px; background: #fff; border: 1px solid #c3c3c3; color: #444; }
.combo .dd { margin-top: -4px; }
.combo .t { padding-top: 1px; }
.combo.size { width: 63px; padding: 0 4px 0 4px; }
.f1 { height: 32px; grid-template-columns: 166px 71px 34px 30px; }
.f2 { height: 31px; margin-top: 13px; grid-template-columns: 40px 37px 31px 17px 11px 34px 17px 10px 35px 18px 35px 10px; }
.on { display: flex; justify-content: center; align-items: center; width: 34px; height: 31px; background: #c6c6c6; }
.bar { width: 1px; height: 29px; background: #d0d0d0; }
.bold { font-size: 20px; line-height: 28px; color: #444; margin-top: -3px; }
.italic { font: italic 700 23px/26px "Liberation Serif", serif; color: #555; margin: -4px 0 0 5px; }
.under { width: 15px; height: 23px; margin-top: -3px; border-bottom: 1px solid #555; font-size: 20px; line-height: 22px; font-weight: 600; color: #555; text-align: center; }
.aleft { width: 195px; padding-left: 19px; }
.a1 { height: 31px; grid-template-columns: 34px 27px 38px 13px 26px 20px; }
.a2 { height: 31px; margin-top: 13px; grid-template-columns: 27px 41px 31px 11px 34px 22px; }
.ln { fill: none; stroke: #666; stroke-width: 1.2px; }
.ln .blue { stroke: #4a7ebb; stroke-width: 2.8px; }
.tall { width: 1px; height: 87px; margin-top: 11px; background: #d0d0d0; }
.w1 { height: 31px; padding-left: 12px; grid-template-columns: 24px 100px; }
.w2 { height: 31px; margin-top: 13px; padding-left: 9px; grid-template-columns: 28px 137px 10px; }
.body .combo.num { width: 198px; margin-left: -1px; padding: 0 5px 0 5px; }
.n2 { height: 31px; margin-top: 12px; padding-left: 4px; grid-template-columns: 35px 19px 40px 26px 11px 34px 22px; }
.pct { font-size: 24px; line-height: 28px; color: #555; }
.g-styles .body { padding-left: 10px; display: grid; grid-template-columns: 110px 79px 69px; }
.g-cells .body { padding-left: 13px; display: grid; grid-template-columns: 57px 58px 62px; }
.g-edit .body { padding-left: 18px; display: grid; grid-template-columns: 129px 52px 6px 58px; }
.g-edit .big:last-child { grid-column: 4; }
.list { padding-top: 4px; }
.list .row { height: 31px; }
.e1 { grid-template-columns: 26px 87px 10px; }
.e2 { grid-template-columns: 27px 25px 10px; }
.e3 { grid-template-columns: 26px 44px 10px; }
.collapse { margin: 117px 0 0 67px; }

.formula { display: flex; height: 65px; padding: 15px 0 0 7px; }
.box { display: flex; align-items: center; height: 35px; background: #fdfdfd; border: 1px solid #c6c6c6; color: #444; }
.box .t { font-size: 18.5px; }
.name { width: 152px; justify-content: space-between; padding: 0 9px 0 7px; }
.name .dd { margin-top: -3px; background: #777; }
.dots { width: 3px; height: 15px; background: repeating-linear-gradient(#aaa 0 3px, transparent 3px 6px); }
.formula .dots { margin: 9px 22px 0 20px; }
.fx { width: 164px; padding-left: 18px; display: grid; grid-template-columns: 53px 55px 30px; }
.fxt { font: italic 24px/30px "Liberation Serif", serif; color: #555; }
.fxt small { font-size: 18px; }
.value { width: 1541px; margin-left: 4px; justify-content: space-between; padding: 0 7px 0 17px; }

.work { display: flex; height: 658px; }
.sheet { display: grid; width: 1890px; height: 658px; overflow: hidden; grid-template-columns: 104px 723px repeat(4, 254px) 47px; grid-template-rows: 75px repeat(8, 77px); border-bottom: 1px solid #999; }
.corner { border-right: 1px solid #ababab; border-bottom: 1px solid #ababab; padding: 4px 0 0 34px; }
.corner i { width: 66px; height: 67px; background: #b4b4b4; clip-path: polygon(100% 0, 100% 100%, 0 100%); }
.colhead { line-height: 75px; font-size: 51px; text-align: center; color: #000; border-bottom: 1px solid #999; border-right: 1px solid; border-image: linear-gradient(#cfcfcf, #8f8f8f) 1; border-top: 0; border-left: 0; }
.colhead.sel { background: #d2d2d2; color: #185c37; border-image: none; border-color: #b0b0b0; }
.colhead:nth-child(7) { border-image: none; border-right: 0; border-color: #999; }
.rowhead { line-height: 76px; font-size: 51px; text-align: center; color: #000; border-right: 1px solid #999; border-bottom: 1px solid #b3b3b3; }
.rowhead.sel { background: #d2d2d2; color: #185c37; }
.cell { position: relative; background: #fff; border-right: 1px solid #d4d4d4; border-bottom: 1px solid #d4d4d4; padding-left: 8px; line-height: 76px; font-family: Lato, "Open Sans", sans-serif; font-size: 53px; color: #000; }
.cell:nth-child(7n) { border-right-color: #999; }
.cell.mid { padding: 0 0 0 2px; text-align: center; }
.cell.head { font-weight: 700; }
.cell.current { z-index: 1; }
.ct { display: inline-block; white-space: nowrap; }
.cursor { position: absolute; inset: -2px; border: 2px solid #217346; }
.cursor i { position: absolute; right: -3px; bottom: -3px; width: 7px; height: 7px; background: #217346; border: solid #fff; border-width: 1px 0 0 1px; }
.vscroll { display: flex; flex-direction: column; width: 25px; margin: 1px 0 0 2px; }
.btn { display: flex; flex: none; align-items: center; justify-content: center; width: 25px; height: 25px; background: #fdfdfd; border: 1px solid #c0c0c0; }
.thumb { background: #fff; border: 1px solid #ababab; }
.track { background: #dadada; }
.vscroll .thumb { height: 212px; }
.vscroll .track { flex: 1; }

.sheets { display: grid; align-items: center; height: 34px; padding-left: 29px; border-bottom: 1px solid #c6c6c6; grid-template-columns: 35px 54px 128px 902px 19px 723px; }
.sheets > svg { margin-top: -1px; }
.sheettab { width: 89px; height: 31px; margin-top: -1px; align-self: start; background: #fff; border: solid #ababab; border-width: 0 1px; border-bottom: 2px solid #217346; color: #217346; padding: 3px 0 0 12px; }
.sheets .dots { margin-top: -4px; }
.hscroll { display: flex; margin-top: -3px; }
.hscroll .thumb { width: 589px; }
.hscroll .track { width: 85px; }

.status { display: grid; align-items: center; height: 32px; padding-left: 9px; background: #f3f3f3; grid-template-columns: 1527px 58px 45px 38px 17px 153px 25px 48px; }
.status > .t { margin-top: -2px; }
.status > svg { margin-top: -1px; }
.viewon { display: flex; align-items: center; justify-content: center; width: 45px; height: 32px; background: #c6c6c6; }

.taskbar { display: grid; grid-template-columns: 72px 516px 907px 425px; grid-template-rows: 57px 3px; height: 60px; background: #1e1e1e; color: #fff; }
.start { grid-row: 1 / 3; padding: 18px 0 0 24px; }
.search { grid-row: 1 / 3; display: flex; align-items: center; gap: 19px; padding-left: 16px; background: #f2f2f2; border: 2px solid #c2c2c2; color: #222; }
.search .t { font-size: 21px; padding-top: 3px; }
.search svg { margin-top: -1px; }
.apps { grid-column: 3; grid-row: 1; display: grid; align-items: center; padding-left: 25px; grid-template-columns: 71px 57px 35px 74px 76px 75px 75px 56px 66px 27px 36px; }
.apps > svg, .duo { margin-top: 3px; }
.duo { width: 5px; height: 36px; border: solid #444; border-width: 0 1px; }
.active { width: 66px; height: 57px; padding: 13px 0 0 18px; background: linear-gradient(135deg, #484848, #555); }
.stack { width: 7px; height: 57px; background: #3d3d3d; border-left: 1px solid #2a2a2a; }
.lines { grid-column: 3; grid-row: 2; display: flex; padding-left: 175px; }
.lines i { height: 3px; background: #e6fba0; width: 61px; }
.lines i:nth-child(2) { margin-left: 89px; }
.lines i:nth-child(3) { margin-left: 14px; width: 47px; }
.lines i:nth-child(4), .lines i:nth-child(6) { width: 14px; background: #b3c384; }
.lines i:nth-child(5) { margin-left: 14px; width: 47px; }
.lines i:nth-child(7) { margin-left: 8px; width: 66px; }
.lines i:nth-child(8) { width: 7px; background: #b3c384; }
.lines i:nth-child(9) { margin-left: 8px; }
.tray { grid-column: 4; grid-row: 1 / 3; display: grid; align-items: center; grid-template-columns: 42px 37px 32px 37px 40px 54px 121px 55px 7px; }
.tray > svg { margin-top: 3px; }
.tray > svg:nth-child(2), .tray > svg:nth-child(4) { margin-top: -2px; }
.tray > svg:nth-child(3), .tray > svg:nth-child(5) { margin-top: 1px; }
.tray > svg:nth-child(8) { margin-top: 12px; }
.tray > .t { margin-top: 1px; }
.clock { display: flex; flex-direction: column; align-items: center; width: 93px; }
.clock .t { line-height: 28px; }
.peek { width: 2px; height: 60px; background: #555; }
</style>
